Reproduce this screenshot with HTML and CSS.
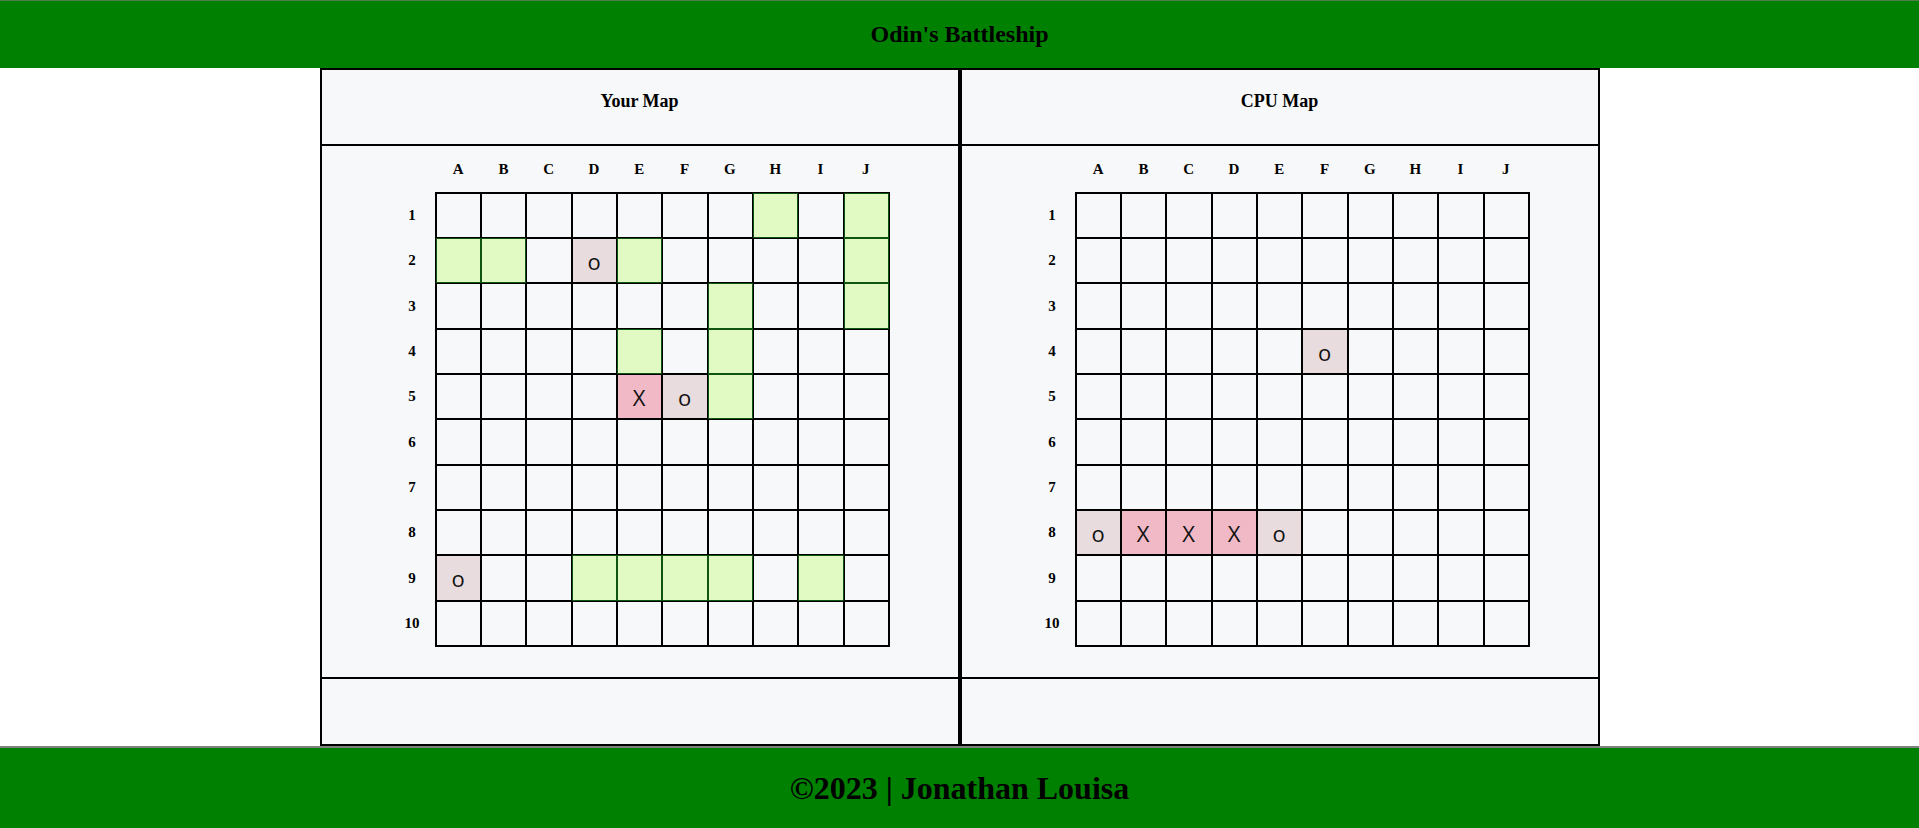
FILE: index.html
```html
<!DOCTYPE html>
<html lang="en">
<head>
    <meta charset="UTF-8">
    <meta name="viewport" content="width=device-width, initial-scale=1">
    <title>Odin's Battleship</title>
    <link rel="stylesheet" href="styles.css">
</head>
<body>
    <header class="top">
        <h1>Odin's Battleship</h1>
    </header>

    <main class="maps">
        <section class="panel">
            <div class="panel-head"><h3>Your Map</h3></div>
            <div class="panel-body">
                <div class="board" id="player-board"></div>
            </div>
            <div class="panel-foot"></div>
        </section>
        <section class="panel">
            <div class="panel-head"><h3>CPU Map</h3></div>
            <div class="panel-body">
                <div class="board" id="cpu-board"></div>
            </div>
            <div class="panel-foot"></div>
        </section>
    </main>

    <footer class="bottom">
        <h1>&copy;2023 | Jonathan Louisa</h1>
    </footer>

    <script src="board.js"></script>
</body>
</html>
```

FILE: styles.css
```css
* {
    box-sizing: border-box;
}

body {
    margin: 0;
    min-height: 100vh;
    display: flex;
    flex-direction: column;
    font-family: "Liberation Serif", "Times New Roman", serif;
    background: #fff;
}

.top {
    height: 68px;
    background-color: green;
    border-top: 1px solid #4f7f4f;
    display: flex;
    align-items: center;
    justify-content: center;
}
.top h1 {
    margin: 0;
    font-size: 24px;
}

.maps {
    display: flex;
    justify-content: center;
}

.panel {
    width: 640px;
    border: 2px solid #000;
    background: #f7f8fa;
}

.panel-head {
    height: 76px;
    padding-top: 21px;
    border-bottom: 2px solid #000;
    text-align: center;
}
.panel-head h3 {
    margin: 0;
    font-size: 18px;
}

.panel-body {
    height: 533px;
    border-bottom: 2px solid #000;
    display: flex;
    justify-content: center;
}

.panel-foot {
    height: 65px;
}

.board {
    display: grid;
    grid-template-columns: 45px 455px;
    grid-template-rows: 46px 455px;
    font-weight: bold;
    font-size: 15px;
}
.cols {
    grid-column: 2;
    display: grid;
    grid-template-columns: repeat(10, 1fr);
    padding: 0 1px;
    align-items: center;
    justify-items: center;
}
.rows {
    grid-row: 2;
    display: grid;
    grid-template-rows: repeat(10, 1fr);
    padding: 1px 0;
    align-items: center;
    justify-items: center;
}
.grid {
    grid-column: 2;
    grid-row: 2;
    display: grid;
    grid-template-columns: repeat(3, 45px 45px 46px) 45px;
    grid-template-rows: repeat(3, 45px 45px 46px) 45px;
    border: 1px solid #000;
}
.cell {
    border: 1px solid #000;
    display: flex;
    align-items: center;
    justify-content: center;
    font-family: "Open Sans", "DejaVu Sans", sans-serif;
    font-weight: normal;
    font-size: 22px;
    color: #111;
}
.cell.ship {
    background: #e1f9c3;
    border-color: #0f540f;
}
.cell.miss {
    background: #e9dcde;
}
.cell.hit {
    background: #f0b9c5;
}

.bottom {
    flex: 1;
    background-color: green;
    border-top: 2px solid #808080;
    display: flex;
    align-items: center;
    justify-content: center;
}
.bottom h1 {
    margin: 0;
    font-size: 32px;
}
```

FILE: board.js
```js
const letters = "ABCDEFGHIJ";

// s = ship, o = miss, x = hit
const playerMap = {
    H1: "s", J1: "s",
    A2: "s", B2: "s", D2: "o", E2: "s", J2: "s",
    G3: "s", J3: "s",
    E4: "s", G4: "s",
    E5: "x", F5: "o", G5: "s",
    A9: "o", D9: "s", E9: "s", F9: "s", G9: "s", I9: "s"
};

const cpuMap = {
    F4: "o",
    A8: "o", B8: "x", C8: "x", D8: "x", E8: "o"
};

function buildBoard(id, marks) {
    const board = document.getElementById(id);

    const cols = document.createElement("div");
    cols.className = "cols";
    for (const l of letters) {
        const d = document.createElement("div");
        d.textContent = l;
        cols.appendChild(d);
    }

    const rows = document.createElement("div");
    rows.className = "rows";
    for (let r = 1; r <= 10; r++) {
        const d = document.createElement("div");
        d.textContent = r;
        rows.appendChild(d);
    }

    const grid = document.createElement("div");
    grid.className = "grid";
    for (let r = 1; r <= 10; r++) {
        for (const l of letters) {
            const cell = document.createElement("div");
            cell.className = "cell";
            const m = marks[l + r];
            if (m === "s") cell.classList.add("ship");
            if (m === "o") { cell.classList.add("miss"); cell.textContent = "o"; }
            if (m === "x") { cell.classList.add("hit"); cell.textContent = "X"; }
            grid.appendChild(cell);
        }
    }

    board.append(cols, rows, grid);
}

buildBoard("player-board", playerMap);
buildBoard("cpu-board", cpuMap);
```
